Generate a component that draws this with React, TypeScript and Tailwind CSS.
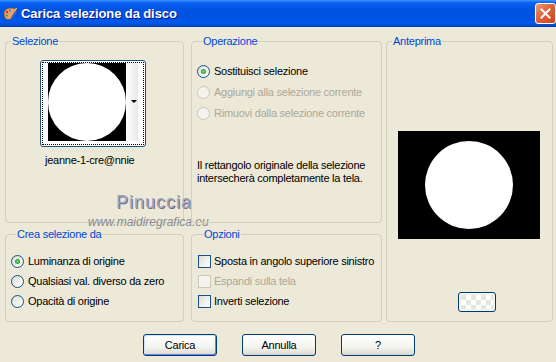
import React from 'react';

const font = "font-['Liberation_Sans',Arial,sans-serif]";

const Radio = ({ label, checked = false, disabled = false }: { label: string; checked?: boolean; disabled?: boolean }) => (
  <div className="flex items-center h-[21px]">
    <span
      className={`relative w-[13px] h-[13px] rounded-full border flex items-center justify-center ${
        disabled
          ? 'border-[#cac8bb] bg-[#f4f3ee]'
          : 'border-[#1c5180] bg-[linear-gradient(135deg,#dcdcd7_0%,#f3f3ef_60%,#ffffff_100%)]'
      }`}
    >
      {checked && <span className="w-[5px] h-[5px] rounded-full bg-[radial-gradient(circle,#7be37b_0%,#21a121_70%)]" />}
    </span>
    <span className={`ml-[4px] ${disabled ? 'text-[#aca899]' : 'text-black'}`}>{label}</span>
  </div>
);

const Check = ({ label, disabled = false }: { label: string; disabled?: boolean }) => (
  <div className="flex items-center h-[20px]">
    <span
      className={`w-[13px] h-[13px] border ${
        disabled
          ? 'border-[#cac8bb] bg-[#f4f3ee]'
          : 'border-[#1c5180] bg-[linear-gradient(135deg,#dcdcd7_0%,#f3f3ef_60%,#ffffff_100%)]'
      }`}
    />
    <span className={`ml-[3px] ${disabled ? 'text-[#aca899]' : 'text-black'}`}>{label}</span>
  </div>
);

const Group = ({ title, className, children }: { title: string; className: string; children?: React.ReactNode }) => (
  <fieldset className={`relative border border-[#d0d0bf] rounded-[4px] ${className}`}>
    <legend className="ml-[5px] px-[1px] leading-[13px] text-[#0046d5]">{title}</legend>
    {children}
  </fieldset>
);

const XpButton = ({ label, def = false }: { label: string; def?: boolean }) => (
  <button
    className={`w-[74px] h-[22px] rounded-[3px] border border-[#003c74] bg-[linear-gradient(to_bottom,#ffffff_0%,#f4f4f0_60%,#e3e0d6_90%,#d6d0c5_100%)] text-black leading-none ${
      def ? 'shadow-[inset_1px_1px_0_#cee7ff,inset_-1px_-1px_0_#6982ee]' : ''
    }`}
  >
    {label}
  </button>
);

export default function App() {
  return (
    <div className={`w-[556px] h-[362px] bg-[#ece9d8] text-[11px] tracking-[-0.25px] ${font} overflow-hidden`}>
      {/* title bar */}
      <div className="h-[27px] flex items-center bg-[linear-gradient(to_bottom,#3d95ff_0%,#0a62f4_10%,#0054e3_30%,#0053e0_60%,#0058ee_85%,#0049c9_95%,#003ab0_100%)]">
        <svg width="16" height="16" viewBox="0 0 16 16" className="ml-[2px]">
          <path d="M2 8c0-4 3-6 7-6s5 2 5 4-2 2-3 3 0 3-2 4-7 1-7-5z" fill="#e8a468" stroke="#8a4a22" strokeWidth="0.8" />
          <circle cx="5" cy="6" r="1.2" fill="#e02a2a" />
          <circle cx="8" cy="4.5" r="1.1" fill="#2a8ae0" />
          <circle cx="4.8" cy="9.6" r="1.1" fill="#2aa83a" />
          <path d="M9 13l5-8" stroke="#3a6ad0" strokeWidth="1.6" />
          <path d="M13 4.5l1.5-2.5" stroke="#ffd040" strokeWidth="1.4" />
        </svg>
        <span className="ml-[3px] text-white font-bold text-[13px] tracking-[-0.1px] [text-shadow:1px_1px_0_#0a1883]">
          Carica selezione da disco
        </span>
        <div className="ml-auto w-[21px] h-[21px] rounded-[3px] border border-white bg-[linear-gradient(135deg,#f09a7c_0%,#e2633c_45%,#c9431c_100%)] flex items-center justify-center">
          <svg width="11" height="11" viewBox="0 0 11 11">
            <path d="M1.5 1.5l8 8M9.5 1.5l-8 8" stroke="white" strokeWidth="2" strokeLinecap="square" />
          </svg>
        </div>
      </div>

      {/* groups */}
      <div className="flex pt-[8px] pl-[5px]">
        <div className="flex flex-col w-[179px]">
          <Group title="Selezione" className="h-[188px]">
            <div className="mt-[12px] ml-[34px] w-[106px] h-[87px] rounded-[3px] border border-[#1c5180] bg-white p-[1px]">
              <div className="w-full h-full border border-dotted border-black flex">
                <div className="ml-[5px] w-[78px] h-[78px] bg-black flex items-center justify-center">
                  <div className="w-[78px] h-[78px] rounded-full bg-white" />
                </div>
                <div className="w-[12px] h-[78px] bg-[linear-gradient(to_right,#ffffff,#e8e8e4)] flex items-center justify-end">
                  <svg width="6" height="4" viewBox="0 0 6 4" className="mr-[1px]">
                    <path d="M0 0h6L3 3z" fill="#000" />
                  </svg>
                </div>
              </div>
            </div>
            <div className="mt-[7px] ml-[39px] leading-[13px] text-black">jeanne-1-cre@nnie</div>
            <div className="absolute left-[110px] top-[141px] text-[18px] tracking-[1px] text-[#a4a4b8] [text-shadow:1px_1px_0_#707084] whitespace-nowrap">
              Pinuccia
            </div>
            <div className="absolute left-[82px] top-[165px] text-[12px] tracking-[0px] italic text-[#8a8a90] whitespace-nowrap">
              www.maidiregrafica.eu
            </div>
          </Group>
          <Group title="Crea selezione da" className="mt-[5px] h-[94px] pl-[5px]">
            <div className="mt-[10px] flex flex-col [&>div]:h-[20px]">
              <Radio label="Luminanza di origine" checked />
              <Radio label="Qualsiasi val. diverso da zero" />
              <Radio label="Opacità di origine" />
            </div>
          </Group>
        </div>

        <div className="flex flex-col w-[191px] ml-[7px]">
          <Group title="Operazione" className="h-[188px] pl-[5px]">
            <div className="mt-[13px] flex flex-col">
              <Radio label="Sostituisci selezione" checked />
              <Radio label="Aggiungi alla selezione corrente" disabled />
              <Radio label="Rimuovi dalla selezione corrente" disabled />
            </div>
            <p className="mt-[35px] leading-[13px] text-black">
              Il rettangolo originale della selezione
              <br />
              intersecherà completamente la tela.
            </p>
          </Group>
          <Group title="Opzioni" className="mt-[5px] h-[94px] pl-[6px]">
            <div className="mt-[10px] flex flex-col">
              <Check label="Sposta in angolo superiore sinistro" />
              <Check label="Espandi sulla tela" disabled />
              <Check label="Inverti selezione" />
            </div>
          </Group>
        </div>

        <Group title="Anteprima" className="ml-[4px] w-[167px] h-[287px]">
          <div className="mt-[83px] ml-[11px] w-[142px] h-[108px] bg-black flex items-center justify-center">
            <div className="w-[88px] h-[88px] rounded-full bg-white" />
          </div>
          <div className="mt-[53px] ml-[71px] w-[38px] h-[20px] rounded-[3px] border border-[#003c74] bg-[#f2f2ee] p-[2px]">
            <div className="w-full h-full bg-[repeating-conic-gradient(#ffffff_0%_25%,#e4e4e0_0%_50%)] bg-[length:10px_10px]" />
          </div>
        </Group>
      </div>

      {/* buttons */}
      <div className="flex mt-[12px] pl-[143px]">
        <XpButton label="Carica" def />
        <div className="ml-[25px]">
          <XpButton label="Annulla" />
        </div>
        <div className="ml-[25px]">
          <XpButton label="?" />
        </div>
      </div>
    </div>
  );
}
